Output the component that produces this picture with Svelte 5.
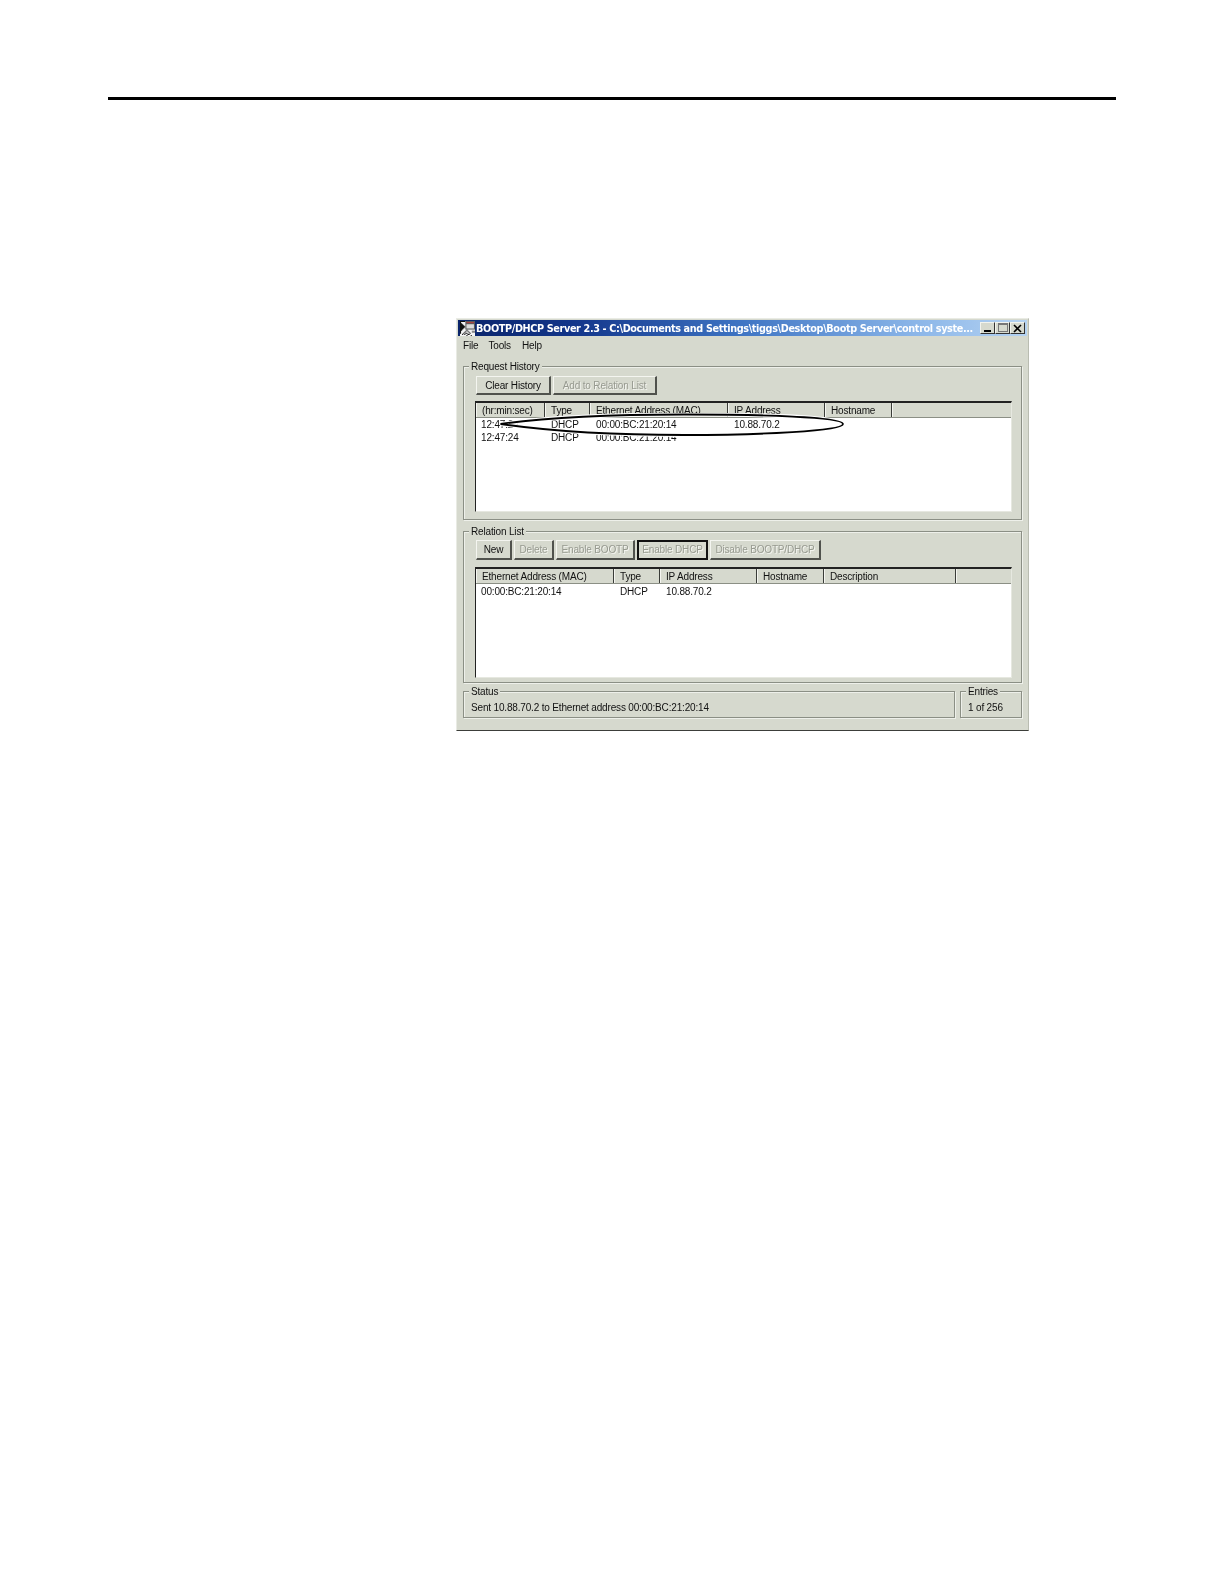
<script>
  const historyCols = ["(hr:min:sec)", "Type", "Ethernet Address (MAC)", "IP Address", "Hostname", ""];
  const historyRows = [
    ["12:47:24", "DHCP", "00:00:BC:21:20:14", "10.88.70.2"],
    ["12:47:24", "DHCP", "00:00:BC:21:20:14", ""],
  ];
  const relationCols = ["Ethernet Address (MAC)", "Type", "IP Address", "Hostname", "Description", ""];
  const relationRows = [["00:00:BC:21:20:14", "DHCP", "10.88.70.2"]];
</script>

<div class="page">
  <div class="rule"></div>

  <div class="window">
    <div class="titlebar">
      <svg class="app-icon" viewBox="0 0 14 14" width="15" height="15" aria-hidden="true">
        <rect width="14" height="14" fill="#f4f4f4" />
        <path d="M0 0h5v1H1v1h1v1h1v1h1v1h1v1H4v1H3v1H2v1H1v3H0z" fill="#111" />
        <path d="M2 12h1v1H2zM4 10h1v1H4zM4 12h1v1H4zM6 11h1v1H6zM6 8h1v1H6zM6 13h1v1H6zM8 10h1v1H8zM8 12h1v1H8zM3 11h1v1H3zM5 9h1v1H5zM5 11h1v1H5zM7 9h1v1H7zM7 12h1v1H7zM9 11h1v1H9zM10 13h1v1h-1z" fill="#111" />
        <rect x="5" y="0" width="9" height="8" fill="#5a5a5a" />
        <rect x="6" y="1" width="7" height="1" fill="#b04040" />
        <rect x="6" y="3" width="7" height="4" fill="#dcdcdc" />
        <rect x="11" y="9" width="3" height="2" fill="#8a8a8a" />
      </svg>
      <span class="title-text">BOOTP/DHCP Server 2.3 - C:\Documents and Settings\tiggs\Desktop\Bootp Server\control syste...</span>
      <div class="caption-btns">
        <button class="cap" aria-label="Minimize"><span class="min-glyph"></span></button>
        <button class="cap" aria-label="Maximize"><span class="max-glyph"></span></button>
        <button class="cap close" aria-label="Close">
          <svg viewBox="0 0 9 9" width="9" height="9"><path d="M1 1l7 7M8 1L1 8" stroke="#000" stroke-width="1.6" fill="none" /></svg>
        </button>
      </div>
    </div>

    <div class="menubar">
      <span class="m-file">File</span>
      <span class="m-tools">Tools</span>
      <span class="m-help">Help</span>
    </div>

    <section class="group history">
      <span class="legend">Request History</span>
      <div class="btn-row">
        <button class="btn w-clear">Clear History</button>
        <button class="btn off w-add">Add to Relation List</button>
      </div>
      <div class="list">
        <div class="head cols-history">
          {#each historyCols as c}<span class="th">{c}</span>{/each}
        </div>
        {#each historyRows as r}
          <div class="row cols-history">
            {#each r as v}<span class="td">{v}</span>{/each}
          </div>
        {/each}
        <svg class="ring" viewBox="0 0 346 24" width="346" height="24" aria-hidden="true">
          <path class="halo" d="M1.5 11C50 4 120 1.5 185 1.5C262 1.5 344 4 344 11C344 18 262 22 185 22C120 22 50 18 1.5 11Z" />
          <path class="ink" d="M1.5 11C50 4 120 1.5 185 1.5C262 1.5 344 4 344 11C344 18 262 22 185 22C120 22 50 18 1.5 11Z" />
        </svg>
      </div>
    </section>

    <section class="group relation">
      <span class="legend">Relation List</span>
      <div class="btn-row tall">
        <button class="btn w-new">New</button>
        <button class="btn off w-delete">Delete</button>
        <button class="btn off w-bootp">Enable BOOTP</button>
        <button class="btn off default w-dhcp">Enable DHCP</button>
        <button class="btn off w-disable">Disable BOOTP/DHCP</button>
      </div>
      <div class="list">
        <div class="head cols-relation">
          {#each relationCols as c}<span class="th">{c}</span>{/each}
        </div>
        {#each relationRows as r}
          <div class="row cols-relation">
            {#each r as v}<span class="td">{v}</span>{/each}
          </div>
        {/each}
      </div>
    </section>

    <div class="status-row">
      <div class="group status">
        <span class="legend">Status</span>
        <span class="status-text">Sent 10.88.70.2 to Ethernet address 00:00:BC:21:20:14</span>
      </div>
      <div class="group entries">
        <span class="legend">Entries</span>
        <span class="status-text">1 of 256</span>
      </div>
    </div>
  </div>
</div>

<style>
  :global(body) {
    margin: 0;
    background: #fff;
  }
  .page {
    height: 1584px;
    padding-top: 97px;
    box-sizing: border-box;
    overflow: hidden;
  }
  .rule {
    width: 1008px;
    height: 3px;
    margin-left: 108px;
    background: #000;
  }
  .window {
    box-sizing: border-box;
    width: 573px;
    height: 413px;
    margin: 218px 0 0 456px;
    padding: 1px;
    background: #d6d9ce;
    border: 1px solid #e9ebe4;
    border-right-color: #b9bcb1;
    border-bottom-color: #3c3e3a;
    font-family: "Liberation Sans", Arial, sans-serif;
    font-size: 10px;
    letter-spacing: -0.17px;
    color: #111;
    filter: blur(0.35px);
  }
  .titlebar {
    display: flex;
    align-items: center;
    height: 16px;
    padding: 0 2px;
    background: linear-gradient(90deg, #0a246a 0%, #12358a 20%, #3f75c4 50%, #8ab5e8 80%, #b5d3f2 100%);
  }
  .app-icon {
    flex: none;
  }
  .title-text {
    flex: none;
    width: 503px;
    margin-left: 1px;
    color: #fff;
    font-family: "DejaVu Sans", Verdana, sans-serif;
    font-size: 9.7px;
    letter-spacing: -0.37px;
    font-weight: 700;
    white-space: nowrap;
  }
  .caption-btns {
    display: flex;
    margin-left: auto;
  }
  .cap {
    display: flex;
    align-items: flex-end;
    justify-content: center;
    width: 15px;
    height: 12px;
    padding: 0;
    background: #d6d9ce;
    border: 1px solid #f2f3ee;
    border-right-color: #333;
    border-bottom-color: #333;
  }
  .close {
    align-items: center;
  }
  .min-glyph {
    width: 7px;
    height: 2px;
    margin-bottom: 1px;
    background: #000;
  }
  .max-glyph {
    width: 8px;
    height: 6px;
    margin-bottom: 1px;
    border: 1px solid #777;
    border-top-width: 2px;
  }
  .menubar {
    height: 18px;
    display: flex;
    align-items: center;
    padding-left: 5px;
  }
  .m-tools {
    margin-left: 10px;
  }
  .m-help {
    margin-left: 11px;
  }
  .group {
    position: relative;
    box-sizing: border-box;
    border: 1px solid #8b8f85;
    box-shadow: inset 1px 1px 0 #eef0ea, 1px 1px 0 #eef0ea;
  }
  .history,
  .relation {
    margin: 0 5px;
    padding: 9px 9px 0 11px;
  }
  .history {
    height: 154px;
    margin-top: 12px;
  }
  .relation {
    height: 152px;
    margin-top: 11px;
    padding-top: 8px;
  }
  .legend {
    position: absolute;
    top: -7px;
    left: 5px;
    padding: 0 2px;
    line-height: 13px;
    background: #d6d9ce;
  }
  .btn-row {
    display: flex;
    gap: 2px;
    height: 19px;
    margin-left: 1px;
  }
  .btn-row.tall {
    height: 20px;
  }
  .btn {
    box-sizing: border-box;
    padding: 0;
    background: #d6d9ce;
    border: 1px solid #f4f5f0;
    border-right: 2px solid #50524d;
    border-bottom: 2px solid #50524d;
    font: inherit;
    letter-spacing: inherit;
    color: #111;
  }
  .off {
    color: #979a90;
    text-shadow: 1px 1px 0 #f4f5f0;
  }
  .default {
    padding-bottom: 1px;
    border: 2px solid #111;
  }
  .w-clear { width: 75px; }
  .w-add { width: 104px; }
  .w-new { width: 36px; }
  .w-delete { width: 40px; }
  .w-bootp { width: 79px; }
  .w-dhcp { width: 71px; }
  .w-disable { width: 111px; }
  .list {
    position: relative;
    box-sizing: border-box;
    height: 111px;
    margin-top: 6px;
    background: #fff;
    border: 1px solid #e6e8e0;
    border-top: 2px solid #222;
    border-left: 1px solid #222;
  }
  .relation .list {
    margin-top: 7px;
  }
  .head,
  .row {
    display: grid;
  }
  .cols-history {
    grid-template-columns: 69px 45px 138px 97px 67px 1fr;
  }
  .cols-relation {
    grid-template-columns: 138px 46px 97px 67px 132px 1fr;
  }
  .head {
    height: 14px;
    background: #d6d9ce;
    border-bottom: 1px solid #8b8f85;
  }
  .th {
    padding: 1px 0 0 5px;
    line-height: 13px;
    white-space: nowrap;
    border-right: 1px solid #3a3c38;
    border-left: 1px solid #f4f5f0;
  }
  .th:last-child {
    border-right: none;
  }
  .row {
    height: 13px;
    line-height: 13px;
  }
  .relation .row {
    padding-top: 1px;
  }
  .td {
    padding-left: 5px;
    white-space: nowrap;
  }
  .row .td:not(:first-child) {
    padding-left: 6px;
  }
  .ring {
    position: absolute;
    top: 10px;
    left: 23px;
  }
  .ring path {
    fill: none;
  }
  .ring .halo {
    stroke: #fff;
    stroke-width: 4;
  }
  .ring .ink {
    stroke: #000;
    stroke-width: 1.8;
  }
  .status-row {
    display: flex;
    gap: 5px;
    margin: 8px 5px 0;
  }
  .status {
    width: 492px;
    height: 27px;
  }
  .entries {
    width: 62px;
    height: 27px;
  }
  .status-text {
    display: block;
    padding: 9px 0 0 7px;
    line-height: 13px;
    white-space: nowrap;
  }
</style>
